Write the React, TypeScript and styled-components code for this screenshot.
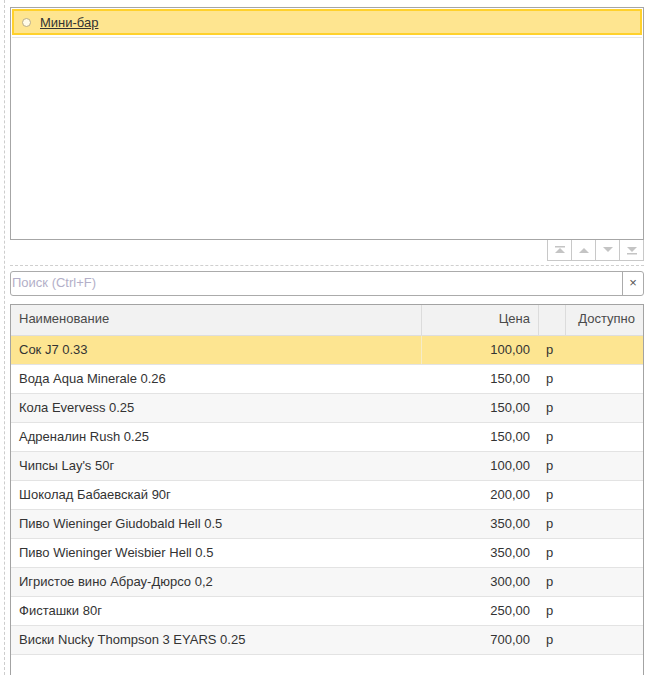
import styled, {createGlobalStyle} from "styled-components";

const items = [
  {name: "Сок J7 0.33", price: "100,00"},
  {name: "Вода Aqua Minerale 0.26", price: "150,00"},
  {name: "Кола Evervess 0.25", price: "150,00"},
  {name: "Адреналин Rush 0.25", price: "150,00"},
  {name: "Чипсы Lay's 50г", price: "100,00"},
  {name: "Шоколад Бабаевскай 90г", price: "200,00"},
  {name: "Пиво Wieninger Giudobald Hell 0.5", price: "350,00"},
  {name: "Пиво Wieninger Weisbier Hell 0.5", price: "350,00"},
  {name: "Игристое вино Абрау-Дюрсо 0,2", price: "300,00"},
  {name: "Фисташки 80г", price: "250,00"},
  {name: "Виски Nucky Thompson 3 EYARS 0.25", price: "700,00"},
];

const Arrow = ({dir, bar}: {dir: "up" | "down"; bar?: boolean}) => (
  <svg width="12" height="10" viewBox="0 0 12 10">
    {dir === "up" ? (
      <>
        {bar && <rect x="1" y="1" width="10" height="1.5" fill="#c4c4c4" />}
        <polygon points="6,3 11,8 1,8" fill="#c4c4c4" />
      </>
    ) : (
      <>
        <polygon points="1,2 11,2 6,7" fill="#c4c4c4" />
        {bar && <rect x="1" y="8" width="10" height="1.5" fill="#c4c4c4" />}
      </>
    )}
  </svg>
);

const App = () => {
  return (
    <>
      <GlobalStyle />
      <Page>
        <Form>
          <ListBox>
            <ListItem>
              <Radio />
              <ItemLink>Мини-бар</ItemLink>
            </ListItem>
          </ListBox>
          <Toolbar>
            <ToolGroup>
              <ToolButton>
                <Arrow dir="up" bar />
              </ToolButton>
              <ToolButton>
                <Arrow dir="up" />
              </ToolButton>
              <ToolButton>
                <Arrow dir="down" />
              </ToolButton>
              <ToolButton>
                <Arrow dir="down" bar />
              </ToolButton>
            </ToolGroup>
          </Toolbar>
          <Divider />
          <Search>
            <SearchInput placeholder="Поиск (Ctrl+F)" />
            <ClearButton>×</ClearButton>
          </Search>
          <Table>
            <HeaderRow>
              <HeadCell>Наименование</HeadCell>
              <HeadCell align="right">Цена</HeadCell>
              <HeadCell />
              <HeadCell align="right">Доступно</HeadCell>
            </HeaderRow>
            {items.map((item, i) => (
              <Row key={item.name} selected={i === 0} odd={i % 2 === 0}>
                <Cell>{item.name}</Cell>
                <Cell align="right" divided={i === 0}>
                  {item.price}
                </Cell>
                <Cell>р</Cell>
                <Cell />
              </Row>
            ))}
          </Table>
        </Form>
      </Page>
    </>
  );
};

const GlobalStyle = createGlobalStyle`
  body {
    margin: 0;
    overflow: hidden;
    background: #fff;
    font-family: "Liberation Sans", Arial, sans-serif;
    font-size: 13px;
    color: #333;
  }
`;

const Page = styled.div`
  padding-left: 4px;
  height: 675px;
  overflow: hidden;
`;

const Form = styled.div`
  border-left: 1px dashed #cdcdcd;
  padding: 7px 13px 0 5px;
  height: 100%;
  box-sizing: border-box;
`;

const ListBox = styled.div`
  border: 1px solid #a6a6a6;
  height: 233px;
  box-sizing: border-box;
  padding: 1px;
`;

const ListItem = styled.div`
  height: 26px;
  box-sizing: border-box;
  display: flex;
  align-items: center;
  padding-left: 8px;
  background: #fee590;
  border: 2px solid #ffd12c;
  box-shadow: 0 2px 0 #fff, 0 3px 0 #e6e6e6;
`;

const Radio = styled.span`
  width: 9px;
  height: 9px;
  box-sizing: border-box;
  border-radius: 50%;
  border: 1px solid #b9ac86;
  background: #fffbe8;
`;

const ItemLink = styled.span`
  margin-left: 9px;
  text-decoration: underline;
  color: #333;
`;

const Toolbar = styled.div`
  display: flex;
  justify-content: flex-end;
`;

const ToolGroup = styled.div`
  display: flex;
  border: 1px solid #c8c8c8;
  border-top: none;
`;

const ToolButton = styled.div`
  width: 23px;
  height: 20px;
  display: flex;
  align-items: center;
  justify-content: center;

  & + & {
    border-left: 1px solid #c8c8c8;
  }
`;

const Divider = styled.div`
  margin-top: 4px;
  border-top: 1px dashed #cfcfcf;
`;

const Search = styled.div`
  margin-top: 5px;
  height: 25px;
  box-sizing: border-box;
  display: flex;
  border: 1px solid #ababab;
  border-radius: 3px;
`;

const SearchInput = styled.input`
  flex: 1;
  border: none;
  outline: none;
  padding: 0 1px 2px;
  font-family: inherit;
  font-size: 13px;
  background: transparent;

  &::placeholder {
    color: #b3afc8;
  }
`;

const ClearButton = styled.div`
  width: 20px;
  padding-bottom: 2px;
  border-left: 1px solid #ababab;
  display: flex;
  align-items: center;
  justify-content: center;
  font-size: 13px;
  color: #555;
`;

const Table = styled.div`
  margin-top: 8px;
  border: 1px solid #a3a3a3;
  height: 400px;
`;

const columns = "410px 117px 27px 1fr";

const HeaderRow = styled.div`
  display: grid;
  grid-template-columns: ${columns};
  height: 31px;
  box-sizing: border-box;
  background: #f2f2f2;
  border-bottom: 1px solid #dedede;
`;

const HeadCell = styled.div<{align?: "right"}>`
  display: flex;
  align-items: center;
  justify-content: ${({align}) => (align === "right" ? "flex-end" : "flex-start")};
  padding: 0 8px 3px;
  color: #4a4a4a;

  & + & {
    border-left: 1px solid #dcdcdc;
  }
`;

const Row = styled.div<{selected?: boolean; odd?: boolean}>`
  display: grid;
  grid-template-columns: ${columns};
  height: 29px;
  box-sizing: border-box;
  border-bottom: 1px solid #e3e3e3;
  background: ${({selected, odd}) =>
    selected ? "#fde591" : odd ? "#f7f7f7" : "#fff"};
`;

const Cell = styled.div<{align?: "right"; divided?: boolean}>`
  display: flex;
  align-items: center;
  justify-content: ${({align}) => (align === "right" ? "flex-end" : "flex-start")};
  padding: 0 8px 2px;
  border-left: ${({divided}) => (divided ? "1px solid #f5ecc8" : "none")};
`;

export default App;
